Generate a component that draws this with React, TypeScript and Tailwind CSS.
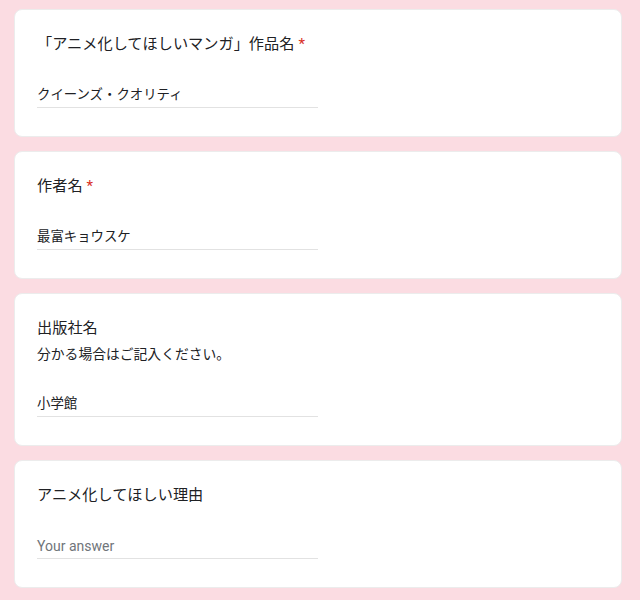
const font = { fontFamily: "Roboto, 'Noto Sans CJK JP', sans-serif" };

type Question = {
  title: string;
  required?: boolean;
  description?: string;
  answer?: string;
};

const questions: Question[] = [
  { title: "「アニメ化してほしいマンガ」作品名", required: true, answer: "クイーンズ・クオリティ" },
  { title: "作者名", required: true, answer: "最富キョウスケ" },
  { title: "出版社名", description: "分かる場合はご記入ください。", answer: "小学館" },
  { title: "アニメ化してほしい理由" },
];

function QuestionCard({ q }: { q: Question }) {
  return (
    <div className="rounded-[8px] border border-[#ececec] bg-white px-[22px] pt-[23px] pb-[28px]">
      <div className="text-[15.2px] leading-[23px] text-[#202124]">
        {q.title}
        {q.required && <span className="ml-[4px] text-[#d93025]">*</span>}
      </div>
      {q.description && (
        <div className="mt-[3px] text-[13.8px] leading-[22px] text-[#202124]">{q.description}</div>
      )}
      <div className="mt-[29px] w-1/2 border-b border-[#e2e2e2] pb-[2px]">
        {q.answer ? (
          <div className="text-[13.4px] leading-[20px] text-[#202124]">{q.answer}</div>
        ) : (
          <div className="text-[14px] leading-[20px] text-[#70757a]">Your answer</div>
        )}
      </div>
    </div>
  );
}

export default function App() {
  return (
    <div className="min-h-[600px] bg-[#fbdce2] px-[14px] pt-[9px] pb-[20px]" style={font}>
      <div className="flex w-[608px] flex-col gap-[14px]">
        {questions.map((q) => (
          <QuestionCard key={q.title} q={q} />
        ))}
      </div>
    </div>
  );
}
